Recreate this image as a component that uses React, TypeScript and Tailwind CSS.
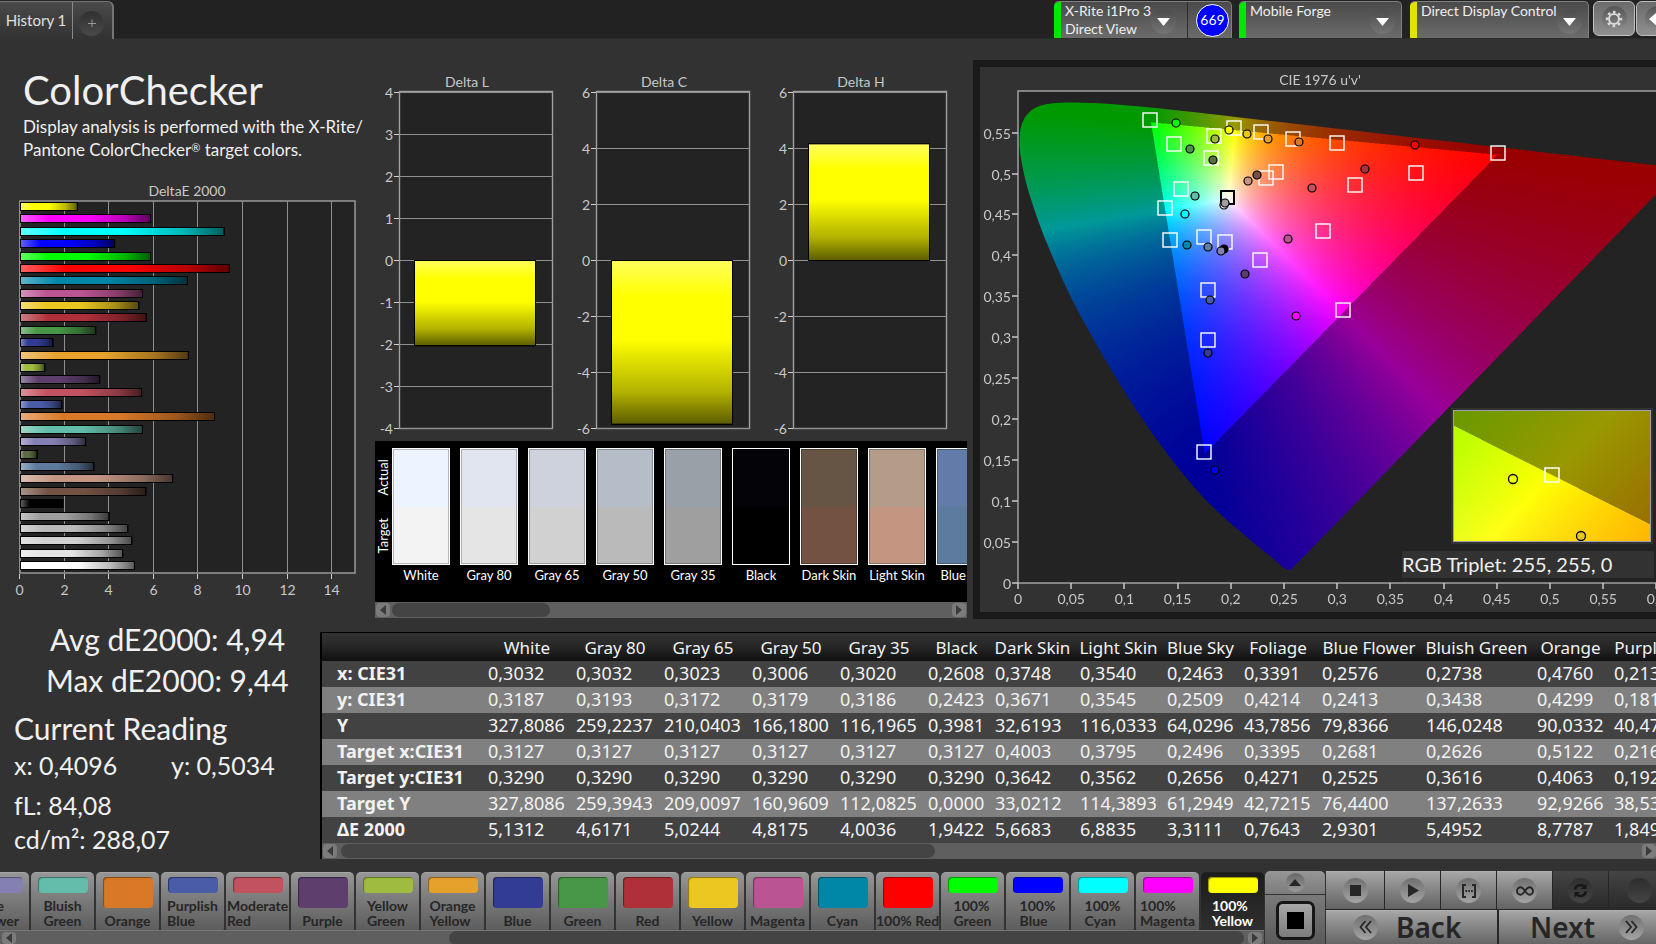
import React, { useLayoutEffect, useRef } from "react";

const LOCUS: [number, number][] = [
  [0.1741, 0.005], [0.1733, 0.0048], [0.1714, 0.0051], [0.1689, 0.0069], [0.1644, 0.0109],
  [0.1566, 0.0177], [0.144, 0.0297], [0.1355, 0.0399], [0.1241, 0.0578], [0.1096, 0.0868],
  [0.0913, 0.1327], [0.0687, 0.2007], [0.0454, 0.295], [0.0235, 0.4127], [0.0082, 0.5384],
  [0.0039, 0.6548], [0.0139, 0.7502], [0.0389, 0.812], [0.0743, 0.8338], [0.1142, 0.8262],
  [0.1547, 0.8059], [0.2296, 0.7543], [0.3016, 0.6923], [0.3731, 0.6245], [0.4441, 0.5547],
  [0.5125, 0.4866], [0.5752, 0.4242], [0.627, 0.3725], [0.6658, 0.334], [0.6915, 0.3083],
  [0.719, 0.2809], [0.7347, 0.2653],
];

function shade(x: number, y: number): [number, number, number] {
  const X = x / y;
  const Z = (1 - x - y) / y;
  const lin = [
    3.2406 * X - 1.5372 - 0.4986 * Z,
    -0.9689 * X + 1.8758 + 0.0415 * Z,
    0.0557 * X - 0.204 + 1.057 * Z,
  ];
  const inside = lin.every((c) => c >= 0);
  const top = Math.max(lin[0], lin[1], lin[2]);
  const k = inside ? 255 : 153;
  const f = (c: number) => (k * Math.max(0, c)) / top;
  return [f(lin[0]), f(lin[1]), f(lin[2])];
}

function paint(ctx: CanvasRenderingContext2D, w: number, h: number, toXy: (px: number, py: number) => [number, number]) {
  const img = ctx.createImageData(w, h);
  const sub = [0.25, 0.75];
  for (let j = 0; j < h; j++) {
    for (let i = 0; i < w; i++) {
      const o = (j * w + i) * 4;
      const sum = [0, 0, 0];
      for (const a of sub) {
        for (const b of sub) {
          const [x, y] = toXy(i + a, j + b);
          const c = shade(x, Math.max(y, 0.0005));
          sum[0] += c[0];
          sum[1] += c[1];
          sum[2] += c[2];
        }
      }
      img.data[o] = sum[0] / 4;
      img.data[o + 1] = sum[1] / 4;
      img.data[o + 2] = sum[2] / 4;
      img.data[o + 3] = 255;
    }
  }
  ctx.putImageData(img, 0, 0);
}

const CIE = { left: 38, bottom: 516, ux: 1064, vy: 819 };

function GamutCanvas() {
  const ref = useRef<HTMLCanvasElement>(null);
  useLayoutEffect(() => {
    const ctx = ref.current?.getContext("2d");
    if (!ctx) return;
    paint(ctx, 760, 545, (px, py) => {
      const u = (px - CIE.left) / CIE.ux;
      const v = (CIE.bottom - py) / CIE.vy;
      const d = 6 * u - 16 * v + 12;
      return [(9 * u) / d, (4 * v) / d];
    });
    const pts = LOCUS.map(([x, y]) => {
      const d = -2 * x + 12 * y + 3;
      return [CIE.left + ((4 * x) / d) * CIE.ux, CIE.bottom - ((9 * y) / d) * CIE.vy];
    });
    ctx.globalCompositeOperation = "destination-in";
    ctx.beginPath();
    ctx.moveTo(pts[0][0], pts[0][1]);
    for (let i = 0; i < pts.length - 1; i++) {
      const p0 = pts[Math.max(0, i - 1)];
      const p1 = pts[i];
      const p2 = pts[i + 1];
      const p3 = pts[Math.min(pts.length - 1, i + 2)];
      ctx.bezierCurveTo(
        p1[0] + (p2[0] - p0[0]) / 6, p1[1] + (p2[1] - p0[1]) / 6,
        p2[0] - (p3[0] - p1[0]) / 6, p2[1] - (p3[1] - p1[1]) / 6,
        p2[0], p2[1],
      );
    }
    ctx.closePath();
    ctx.fill();
  }, []);
  return <canvas ref={ref} width={760} height={545} className="absolute top-0 left-0 max-w-none" />;
}

function DetailCanvas() {
  const ref = useRef<HTMLCanvasElement>(null);
  useLayoutEffect(() => {
    const ctx = ref.current?.getContext("2d");
    if (!ctx) return;
    paint(ctx, 196, 130, (px, py) => [0.4193 + (px - 98) / 3950, 0.5053 + (64 - py) / 2500]);
  }, []);
  return <canvas ref={ref} width={196} height={130} className="block" />;
}

const TARGETS: [number, number][] = [
  [170, 53], [254, 61], [281, 65], [313, 72], [357, 76], [234, 69], [194, 77], [231, 91], [518, 86],
  [296, 105], [286, 111], [436, 106], [375, 118], [201, 122], [185, 141], [343, 164], [190, 173],
  [224, 170], [245, 175], [280, 193], [228, 223], [363, 243], [228, 273], [224, 385],
];

const READINGS: [number, number, string][] = [
  [196, 56, "#00ff00"], [249, 63, "#ffff00"], [267, 67, "#e7c71f"], [235, 72, "#a0bc40"],
  [288, 72, "#e6a02e"], [319, 75, "#d87a2b"], [210, 82, "#4a9549"], [233, 93, "#5b6b42"],
  [435, 78, "#ff0000"], [385, 102, "#af3039"], [277, 108, "#735243"], [268, 114, "#c3967f"],
  [332, 121, "#c15360"], [215, 129, "#64bdaa"], [205, 147, "#00ffff"], [244, 138, "#f3f3f3"],
  [245, 136, "#9f9f9f"], [308, 172, "#bb5492"], [207, 178, "#0087a7"], [228, 180, "#607c9f"],
  [244, 182, "#000000"], [241, 184, "#8580b3"], [265, 207, "#5c3e6b"], [230, 233, "#4a5ca7"],
  [316, 249, "#ff00ff"], [228, 286, "#333c95"], [235, 403, "#0000ff"],
];

const dec = (n: number) => String(Number(n.toFixed(2))).replace(".", ",");

function CieChart() {
  const steps = Array.from({ length: 13 }, (_, i) => i * 0.05);
  return (
    <section className="min-w-0 flex-1 mt-[21px] border-[7px] border-r-0 border-[#1a1a1a] bg-[#323232] overflow-hidden">
      <div className="relative w-[760px] h-[545px]">
        <div className="absolute left-[38px] top-[24px] right-0 bottom-[29px] bg-[#232323]" />
        <GamutCanvas />
        <svg width="760" height="545" className="absolute top-0 left-0 text-sm" fill="#c8c8c8">
          <text x="340" y="18" textAnchor="middle">CIE 1976 u'v'</text>
          <path d="M760 24H38V516H760" fill="none" stroke="#a0a0a0" strokeWidth="1.5" />
          {steps.map((s) => (
            <g key={s}>
              <path d={`M${Math.round(CIE.left + s * CIE.ux)} 516v6`} stroke="#c8c8c8" strokeWidth="1.5" />
              <text x={CIE.left + s * CIE.ux} y="537" textAnchor="middle">{dec(s)}</text>
              {s < 0.56 && (
                <>
                  <path d={`M32 ${Math.round(CIE.bottom - s * CIE.vy)}h6`} stroke="#c8c8c8" strokeWidth="1.5" />
                  <text x="31" y={CIE.bottom - s * CIE.vy + 6} textAnchor="end">{dec(s)}</text>
                </>
              )}
            </g>
          ))}
          {TARGETS.map(([x, y]) => (
            <rect key={`${x}-${y}`} x={x - 7} y={y - 7} width="14" height="14" fill="none" stroke="#fff" strokeWidth="1.4" />
          ))}
          <rect x="241" y="124" width="13" height="13" fill="none" stroke="#000" strokeWidth="2" />
          {READINGS.map(([x, y, c]) => (
            <circle key={`${x}-${y}`} cx={x} cy={y} r="4" fill={c} stroke="#000" strokeWidth="1.2" />
          ))}
        </svg>
        <div className="absolute left-[471px] top-[341px] border-2 border-[#323232]">
          <div className="relative border border-[#a0a0a0] overflow-hidden">
            <DetailCanvas />
            <svg width="196" height="130" className="absolute inset-0" fill="none">
              <rect x="91" y="57" width="14" height="14" stroke="#fff" strokeWidth="1.5" />
              <circle cx="59" cy="68" r="4.5" stroke="#000" strokeWidth="1.3" />
              <circle cx="127" cy="125" r="4.5" fill="#e7c71f" stroke="#000" strokeWidth="1.3" />
            </svg>
          </div>
        </div>
        <p className="absolute left-[422px] top-[484px] w-[252px] bg-[#323232] text-xl leading-[27px] text-[#f0f0f0] whitespace-nowrap">
          RGB Triplet: 255, 255, 0
        </p>
      </div>
    </section>
  );
}

const DELTA_E: [string, number][] = [
  ["#ffff00", 2.55], ["#ff00ff", 5.83], ["#00ffff", 9.13], ["#0000ff", 4.22], ["#00ff00", 5.83],
  ["#ff0000", 9.37], ["#0087a7", 7.49], ["#bb5492", 5.47], ["#ebc722", 5.3], ["#af3039", 5.64],
  ["#489647", 3.37], ["#333c95", 1.45], ["#e6a12d", 7.53], ["#9fbc40", 1.09], ["#5d3e6c", 3.55],
  ["#c2525f", 5.43], ["#4a5ca7", 1.85], ["#d97928", 8.7], ["#63bdaa", 5.47], ["#8580b3", 2.92],
  ["#5b6b42", 0.75], ["#5d7b9e", 3.29], ["#c49682", 6.82], ["#735243", 5.62], ["#000000", 1.9],
  ["#9f9f9f", 3.97], ["#bababa", 4.81], ["#d1d1d1", 4.99], ["#e5e5e5", 4.58], ["#ffffff", 5.11],
];

function Shading() {
  return (
    <svg width="0" height="0" className="absolute" aria-hidden="true">
      <defs>
        <linearGradient id="across" x1="0" x2="1" y1="0" y2="0">
          <stop offset="0" stopColor="#fff" stopOpacity=".38" />
          <stop offset=".22" stopColor="#fff" stopOpacity="0" />
          <stop offset=".5" stopColor="#000" stopOpacity="0" />
          <stop offset=".8" stopColor="#000" stopOpacity=".28" />
          <stop offset="1" stopColor="#000" stopOpacity=".64" />
        </linearGradient>
        <linearGradient id="down" x1="0" x2="0" y1="0" y2="1">
          <stop offset="0" stopColor="#fff" stopOpacity=".36" />
          <stop offset=".22" stopColor="#fff" stopOpacity="0" />
          <stop offset=".48" stopColor="#000" stopOpacity="0" />
          <stop offset=".8" stopColor="#000" stopOpacity=".3" />
          <stop offset="1" stopColor="#000" stopOpacity=".64" />
        </linearGradient>
      </defs>
    </svg>
  );
}

function DeltaEChart() {
  const unit = 22.3;
  return (
    <svg width="375" height="420" className="block text-sm" fill="#c8c8c8">
      <text x="187" y="15" textAnchor="middle">DeltaE 2000</text>
      <rect x="20" y="20" width="335" height="372" fill="#232323" stroke="#a0a0a0" strokeWidth="1.4" />
      {[0, 2, 4, 6, 8, 10, 12, 14].map((n) => {
        const x = Math.round(19 + n * unit) + 0.5;
        return (
          <g key={n}>
            <path d={`M${x} 20V392`} stroke="#909090" />
            <path d={`M${x} 393v5`} stroke="#d0d0d0" />
            <text x={x} y="414" textAnchor="middle">{n}</text>
          </g>
        );
      })}
      {DELTA_E.map(([c, v], i) => {
        const y = Math.round(21 + i * 12.38) + 0.5;
        return (
          <g key={i}>
            <rect x="20.5" y={y} width={v * unit} height="8" fill={c} stroke="#000" />
            <rect x="20.5" y={y} width={v * unit} height="8" fill="url(#across)" stroke="#000" />
          </g>
        );
      })}
    </svg>
  );
}

function DeltaChart({ title, max, step, value }: { title: string; max: number; step: number; value: number }) {
  const top = 20.5;
  const mid = 189;
  const unit = 168 / max;
  const ticks: number[] = [];
  for (let t = max; t >= -max; t -= step) ticks.push(t);
  const y = value > 0 ? mid + 0.5 - value * unit : mid + 0.5;
  return (
    <svg width="197" height="370" className="block shrink-0 text-sm" fill="#c8c8c8">
      <text x="92" y="16" textAnchor="middle">{title}</text>
      <rect x="24.5" y={top} width="153" height="337" fill="#232323" stroke="#a0a0a0" strokeWidth="1.4" />
      {ticks.map((t) => {
        const ty = Math.round(mid - t * unit) + 0.5;
        return (
          <g key={t}>
            <path d={`M24 ${ty}H178`} stroke="#909090" />
            <path d={`M19 ${ty}h5`} stroke="#d0d0d0" />
            <text x="18" y={ty + 5} textAnchor="end">{t}</text>
          </g>
        );
      })}
      <rect x="39.5" y={y} width="121" height={Math.abs(value) * unit} fill="#ffff00" stroke="#000" />
      <rect x="39.5" y={y} width="121" height={Math.abs(value) * unit} fill="url(#down)" stroke="#000" />
    </svg>
  );
}

function Arrow({ dir }: { dir: "left" | "right" }) {
  return (
    <button
      type="button"
      aria-label={dir === "left" ? "Scroll left" : "Scroll right"}
      className="shrink-0 w-[14px] self-stretch my-px rounded-[4px] bg-[#7b7b7b] flex items-center justify-center"
    >
      <svg width="6" height="10" fill="#3a3a3a">
        <path d={dir === "left" ? "M6 0V10L0 5Z" : "M0 0V10L6 5Z"} />
      </svg>
    </button>
  );
}

const SWATCHES: [string, string, string][] = [
  ["White", "#eef4ff", "#f3f3f3"], ["Gray 80", "#e1e5f0", "#e5e5e5"], ["Gray 65", "#cdd2dd", "#d1d1d1"],
  ["Gray 50", "#b5bdc8", "#bababa"], ["Gray 35", "#9aa0a7", "#9f9f9f"], ["Black", "#030308", "#000000"],
  ["Dark Skin", "#665545", "#735243"], ["Light Skin", "#b39c89", "#c49682"], ["Blue Sky", "#637ba9", "#5d7b9e"],
];

function SwatchPanel() {
  return (
    <div className="w-[592px] bg-black text-white">
      <div className="flex h-[161px] overflow-hidden pt-[7px]">
        <div className="w-[17px] shrink-0 h-[117px] flex flex-col-reverse text-[13px] leading-[17px]">
          <span className="flex-1 [writing-mode:vertical-rl] rotate-180 text-center">Target</span>
          <span className="flex-1 [writing-mode:vertical-rl] rotate-180 text-center">Actual</span>
        </div>
        <ul className="flex gap-[10px]">
          {SWATCHES.map(([name, actual, target]) => (
            <li key={name} className="w-[58px] shrink-0">
              <div className="h-[117px] border border-white flex flex-col">
                <div className="flex-1 border border-b-0 border-black/25" style={{ background: actual }} />
                <div className="flex-1 border border-t-0 border-black/25" style={{ background: target }} />
              </div>
              <p className="text-center text-[13px] leading-[20px] whitespace-nowrap">{name}</p>
            </li>
          ))}
        </ul>
      </div>
      <div className="h-4 bg-[#5f5f5f] flex items-center px-px">
        <Arrow dir="left" />
        <div className="ml-[2px] h-[14px] w-[158px] rounded-full bg-[#444]" />
        <div className="flex-1" />
        <Arrow dir="right" />
      </div>
    </div>
  );
}

const COLUMNS: [string, string, string[]][] = [
  ["White", "w-[88px]", ["0,3032", "0,3187", "327,8086", "0,3127", "0,3290", "327,8086", "5,1312"]],
  ["Gray 80", "w-[88px]", ["0,3032", "0,3193", "259,2237", "0,3127", "0,3290", "259,3943", "4,6171"]],
  ["Gray 65", "w-[88px]", ["0,3023", "0,3172", "210,0403", "0,3127", "0,3290", "209,0097", "5,0244"]],
  ["Gray 50", "w-[88px]", ["0,3006", "0,3179", "166,1800", "0,3127", "0,3290", "160,9609", "4,8175"]],
  ["Gray 35", "w-[88px]", ["0,3020", "0,3186", "116,1965", "0,3127", "0,3290", "112,0825", "4,0036"]],
  ["Black", "w-[67px]", ["0,2608", "0,2423", "0,3981", "0,3127", "0,3290", "0,0000", "1,9422"]],
  ["Dark Skin", "w-[85px]", ["0,3748", "0,3671", "32,6193", "0,4003", "0,3642", "33,0212", "5,6683"]],
  ["Light Skin", "w-[87px]", ["0,3540", "0,3545", "116,0333", "0,3795", "0,3562", "114,3893", "6,8835"]],
  ["Blue Sky", "w-[77px]", ["0,2463", "0,2509", "64,0296", "0,2496", "0,2656", "61,2949", "3,3111"]],
  ["Foliage", "w-[78px]", ["0,3391", "0,4214", "43,7856", "0,3395", "0,4271", "42,7215", "0,7643"]],
  ["Blue Flower", "w-[104px]", ["0,2576", "0,2413", "79,8366", "0,2681", "0,2525", "76,4400", "2,9301"]],
  ["Bluish Green", "w-[111px]", ["0,2738", "0,3438", "146,0248", "0,2626", "0,3616", "137,2633", "5,4952"]],
  ["Orange", "w-[77px]", ["0,4760", "0,4299", "90,0332", "0,5122", "0,4063", "92,9266", "8,7787"]],
  ["Purplish Blue", "w-[116px]", ["0,213", "0,181", "40,47", "0,216", "0,192", "38,53", "1,849"]],
];
const ROWS = ["x: CIE31", "y: CIE31", "Y", "Target x:CIE31", "Target y:CIE31", "Target Y", "ΔE 2000"];

function DataTable() {
  return (
    <div className="mt-[13px] mb-[12px] min-w-0 flex-1 border-l-2 border-t border-black overflow-hidden">
      <div className="overflow-hidden">
        <table className="table-fixed w-[1315px] border-collapse text-[18px] leading-[24px] text-[#f2f2f2] [font-family:'Noto_Sans',sans-serif]">
          <thead>
            <tr className="h-[28px] bg-linear-to-b from-[#333] via-[#262626] to-[#101010]">
              <th className="w-[161px]" aria-label="Quantity" />
              {COLUMNS.map(([name, w]) => (
                <th key={name} className={`${w} p-0 pt-px font-normal text-[17px] whitespace-nowrap`}>{name}</th>
              ))}
            </tr>
          </thead>
          <tbody>
            {ROWS.map((row, r) => (
              <tr key={row} className="bg-[#424242] even:bg-[#808080]">
                <th className="p-0 pb-[2px] pl-[15px] text-left font-bold whitespace-nowrap">{row}</th>
                {COLUMNS.map(([name, , vals]) => (
                  <td key={name} className="p-0 pb-[2px] pl-[5px] whitespace-nowrap">{vals[r]}</td>
                ))}
              </tr>
            ))}
          </tbody>
        </table>
      </div>
      <div className="h-4 bg-[#5f5f5f] flex items-center pl-px">
        <Arrow dir="left" />
        <div className="ml-[4px] h-[14px] w-[594px] rounded-full bg-[#444]" />
        <div className="flex-1" />
        <Arrow dir="right" />
      </div>
    </div>
  );
}

const PATCHES: [string, string][] = [
  ["Blue\nFlower", "#8580b3"], ["Bluish\nGreen", "#63bdaa"], ["Orange", "#d97928"], ["Purplish\nBlue", "#4a5ca7"],
  ["Moderate\nRed", "#c2525f"], ["Purple", "#5d3e6c"], ["Yellow\nGreen", "#9fbc40"], ["Orange\nYellow", "#e6a12d"],
  ["Blue", "#333c95"], ["Green", "#489647"], ["Red", "#af3039"], ["Yellow", "#ebc722"], ["Magenta", "#bb5492"],
  ["Cyan", "#0087a7"], ["100% Red", "#ff0000"], ["100%\nGreen", "#00ff00"], ["100%\nBlue", "#0000ff"],
  ["100%\nCyan", "#00ffff"], ["100%\nMagenta", "#ff00ff"], ["100%\nYellow", "#ffff00"],
];

function PatchButton({ name, color, active }: { name: string; color: string; active: boolean }) {
  const tall = !name.includes("\n");
  return (
    <button
      type="button"
      aria-pressed={active}
      className={`shrink-0 w-[63px] h-[61px] pt-[4px] pb-[5px] rounded-[5px] border-t flex flex-col items-center justify-between ${
        active
          ? "border-[#222] bg-linear-to-b from-[#1c1c1c] to-[#303030] text-white"
          : "border-[#a5a5a5] bg-linear-to-b from-[#969696] to-[#5a5a5a] text-[#262626]"
      }`}
    >
      <span
        className={`w-[50px] rounded-[4px] shadow-[inset_1px_1px_1px_rgba(0,0,0,0.4)] ${tall ? "h-[31px]" : "h-[16px]"}`}
        style={{ background: color }}
      />
      <span className="text-[14px] leading-[15px] font-bold text-left whitespace-pre">{name}</span>
    </button>
  );
}

function Knob({ children }: { children: React.ReactNode }) {
  return (
    <span className="size-[25px] rounded-full bg-linear-to-b from-[#707070] to-[#a4a4a4] flex items-center justify-center">
      {children}
    </span>
  );
}

const KEY = "flex items-center bg-linear-to-b from-[#a6a6a6] to-[#636363] border-t border-[#b0b0b0]";

function Transport() {
  return (
    <div className="shrink-0 flex text-[#262626]">
      <div className="w-[60px] mx-px flex flex-col gap-px">
        <button type="button" aria-label="Expand" className="h-[23px] rounded-t-[5px] bg-linear-to-b from-[#969696] to-[#7c7c7c] flex items-center justify-center">
          <span className="size-[19px] rounded-full bg-linear-to-b from-[#666] to-[#9a9a9a] flex items-center justify-center">
            <svg width="12" height="7" fill="#262626"><path d="M6 0L12 7H0Z" /></svg>
          </span>
        </button>
        <button type="button" aria-label="Pattern window" className="flex-1 bg-linear-to-b from-[#7a7a7a] to-[#5a5a5a] flex items-center justify-center">
          <span className="size-[39px] rounded-[7px] border-[3px] border-[#161616] bg-linear-to-b from-[#a8a8a8] to-[#7c7c7c] flex items-center justify-center">
            <span className="size-[17px] bg-black" />
          </span>
        </button>
      </div>
      <div className="w-[330px] flex flex-col gap-px bg-[#262626]">
        <div className="grid grid-cols-[58px_55px_55px_55px_55px_1fr] gap-px h-[38px]">
          <button type="button" aria-label="Stop" className={`${KEY} justify-center`}>
            <Knob><svg width="11" height="11" fill="currentColor"><path d="M0 0h11v11H0z" /></svg></Knob>
          </button>
          <button type="button" aria-label="Play" className={`${KEY} justify-center`}>
            <Knob><svg width="12" height="13" fill="currentColor"><path d="M1 0L12 6.5L1 13Z" /></svg></Knob>
          </button>
          <button type="button" aria-label="Measure series" className={`${KEY} justify-center`}>
            <Knob>
              <svg width="16" height="14" fill="none" stroke="currentColor" strokeWidth="2">
                <path d="M5 1H2V13H5M11 1H14V13H11" />
                <path d="M4.5 7H12" strokeDasharray="1.6 1.2" />
              </svg>
            </Knob>
          </button>
          <button type="button" aria-label="Measure continuously" className={`${KEY} justify-center`}>
            <Knob>
              <svg width="18" height="10" fill="none" stroke="currentColor" strokeWidth="1.9">
                <path d="M9 5C7 2.2 6 1.3 4.6 1.3a3.6 3.7 0 0 0 0 7.4C6 8.7 7 7.8 9 5C11 2.2 12 1.3 13.4 1.3a3.6 3.7 0 0 1 0 7.4C12 8.7 11 7.8 9 5Z" />
              </svg>
            </Knob>
          </button>
          <button type="button" aria-label="Refresh" disabled className="flex items-center justify-center bg-linear-to-b from-[#444] to-[#2a2a2a] text-[#171717]">
            <span className="size-[25px] rounded-full bg-linear-to-b from-[#2e2e2e] to-[#444] flex items-center justify-center">
              <svg width="15" height="15" viewBox="0 0 15 15" fill="none" stroke="currentColor" strokeWidth="2.4">
                <path d="M2 6.5A5.5 5.5 0 0 1 11.5 3.8M13 8.5A5.5 5.5 0 0 1 3.5 11.2" />
                <path d="M13.5 0.5V6H8ZM1.5 14.5V9H7Z" fill="currentColor" stroke="none" />
              </svg>
            </span>
          </button>
          <button type="button" aria-label="Record" disabled className="flex items-center justify-center bg-linear-to-b from-[#444] to-[#2a2a2a] pl-[13px]">
            <span className="size-[25px] rounded-full bg-linear-to-b from-[#2e2e2e] to-[#444]" />
          </button>
        </div>
        <div className="flex-1 grid grid-cols-[171px_1fr] gap-[2px] [font-family:'Noto_Sans',sans-serif] text-[28px] leading-[32px] font-semibold">
          <button type="button" className={`${KEY} pb-[2px] pl-[27px] gap-[18px]`}>
            <Knob>
              <svg width="13" height="14" fill="none" stroke="currentColor" strokeWidth="1.8"><path d="M6.5 1L1.5 7L6.5 13M12 1L7 7L12 13" /></svg>
            </Knob>
            Back
          </button>
          <button type="button" className={`${KEY} pb-[2px] pl-[31px] gap-[24px]`}>
            Next
            <Knob>
              <svg width="13" height="14" fill="none" stroke="currentColor" strokeWidth="1.8"><path d="M1 1L6 7L1 13M6.5 1L11.5 7L6.5 13" /></svg>
            </Knob>
          </button>
        </div>
      </div>
    </div>
  );
}

function DropKnob() {
  return (
    <span className="shrink-0 size-[25px] mt-[7px] rounded-full bg-linear-to-b from-[#4c4c4c] to-[#757575] flex items-center justify-center">
      <svg width="13" height="8" fill="#fff"><path d="M0 0H13L6.5 8Z" /></svg>
    </span>
  );
}

const DEVICE = "h-[37px] flex items-start overflow-hidden rounded-t-[5px] border-t border-r border-[#808080] bg-linear-to-b from-[#4a4a4a] to-[#6c6c6c] text-[14px] leading-[18px] text-[#f0f0f0] text-left";

function Header() {
  return (
    <header className="h-[39px] pt-px bg-[#222] border-b border-[#2b2b2b] flex items-start justify-between">
      <div className="flex h-[38px] w-[114px] rounded-tr-[6px] border-t border-r-2 border-[#757575] bg-linear-to-b from-[#4a4a4a] to-[#323232]">
        <button type="button" className="w-[73px] border-r border-[#888] text-[15px] text-[#e0e0e0]">History 1</button>
        <button type="button" aria-label="New tab" className="flex-1 flex items-center justify-center pr-[2px]">
          <span className="size-[25px] mt-[5px] rounded-full bg-linear-to-b from-[#303030] to-[#4a4a4a] text-[#999] flex items-center justify-center">
            <svg width="8" height="8" stroke="currentColor"><path d="M4 0.5V8M0 4.5H8" /></svg>
          </span>
        </button>
      </div>
      <div className="flex">
        <div className={`${DEVICE} w-[178px] mr-[7px]`}>
          <span className="shrink-0 w-[7px] self-stretch bg-[#00e800]" />
          <button type="button" className="min-w-0 flex-1 flex justify-between items-start text-left pl-[4px] pr-[12px]">
            <span className="whitespace-nowrap">X-Rite i1Pro 3<br />Direct View</span>
            <DropKnob />
          </button>
          <span className="shrink-0 w-px h-full bg-[#2c2c2c]" />
          <span className="shrink-0 w-[43px] pl-[8px] h-full flex items-center">
            <span className="shrink-0 size-[33px] rounded-full border border-white bg-[#00f] text-[14px] text-white flex items-center justify-center">669</span>
          </span>
        </div>
        <button type="button" className={`${DEVICE} w-[163px] mr-[8px]`}>
          <span className="shrink-0 w-[7px] self-stretch bg-[#00e800]" />
          <span className="min-w-0 flex-1 pl-[4px] whitespace-nowrap">Mobile Forge</span>
          <span className="mr-[6px]"><DropKnob /></span>
        </button>
        <button type="button" className={`${DEVICE} w-[179px] mr-[4px]`}>
          <span className="shrink-0 w-[7px] self-stretch bg-[#e2e200]" />
          <span className="min-w-0 flex-1 pl-[4px] whitespace-nowrap">Direct Display Control</span>
          <span className="mr-[6px]"><DropKnob /></span>
        </button>
        <button type="button" aria-label="Settings" className="w-[42px] h-[35px] rounded-[6px] border border-[#c0c0c0] bg-linear-to-b from-[#6a6a6a] to-[#909090] flex items-center justify-center">
          <span className="size-[25px] rounded-full bg-linear-to-b from-[#555] to-[#8c8c8c] flex items-center justify-center">
            <svg width="18" height="18" viewBox="-9 -9 18 18" fill="none" stroke="#dcdcdc">
              <circle r="5" strokeWidth="2" />
              <circle r="7" strokeWidth="2.4" strokeDasharray="2.6 2.898" strokeDashoffset="1.3" />
            </svg>
          </span>
        </button>
        <div className="w-[21px] overflow-hidden">
          <button type="button" aria-label="Collapse" className="ml-px w-[42px] h-[35px] rounded-[6px] border border-[#c0c0c0] bg-linear-to-b from-[#6a6a6a] to-[#909090] flex items-center justify-center">
            <span className="size-[25px] rounded-full bg-linear-to-b from-[#555] to-[#8c8c8c] flex items-center pl-[4px]">
              <svg width="8" height="14" fill="#fff"><path d="M8 0V14L0 7Z" /></svg>
            </span>
          </button>
        </div>
      </div>
    </header>
  );
}

export default function App() {
  return (
    <div className="min-h-screen flex flex-col overflow-hidden bg-[#323232] text-[#f0f0f0] [font-family:Lato,'Noto_Sans',sans-serif]">
      <Shading />
      <Header />
      <main className="flex-1 flex flex-col">
        <div className="flex">
          <div className="w-[375px] shrink-0 pt-[27px]">
            <h1 className="pl-[23px] text-[40px] leading-[48px]">ColorChecker</h1>
            <p className="pl-[23px] pt-px text-[17px] leading-[23px] whitespace-nowrap">
              Display analysis is performed with the X-Rite/
              <br />
              Pantone ColorChecker<span className="text-[11px] leading-none align-[4px]">®</span> target colors.
            </p>
            <div className="pt-[20px]">
              <DeltaEChart />
            </div>
          </div>
          <div className="w-[592px] shrink-0 pt-[32px]">
            <div className="flex h-[370px]">
              <DeltaChart title="Delta L" max={4} step={1} value={-2.03} />
              <DeltaChart title="Delta C" max={6} step={2} value={-5.85} />
              <DeltaChart title="Delta H" max={6} step={2} value={4.17} />
            </div>
            <SwatchPanel />
          </div>
          <div className="w-[6px] shrink-0" />
          <CieChart />
        </div>
        <div className="flex">
          <div className="w-[320px] shrink-0">
            <div className="text-[30px] leading-[41px]">
              <p className="pl-[50px]">Avg dE2000: 4,94</p>
              <p className="pl-[46px]">Max dE2000: 9,44</p>
            </div>
            <div className="pl-[14px] pt-[7px] text-[25px] leading-[34px]">
              <h2 className="text-[30px] leading-[40px]">Current Reading</h2>
              <p className="flex"><span className="w-[157px]">x: 0,4096</span><span>y: 0,5034</span></p>
              <p className="pt-[6px]">fL: 84,08</p>
              <p>cd/m²: 288,07</p>
            </div>
          </div>
          <DataTable />
        </div>
      </main>
      <footer className="h-[74px] flex items-stretch">
        <div className="min-w-0 flex-1 flex flex-col bg-[#333]">
          <div className="flex justify-end gap-[2px] overflow-hidden h-[62px] pt-px">
            {PATCHES.map(([name, color], i) => (
              <PatchButton key={i} name={name} color={color} active={i === PATCHES.length - 1} />
            ))}
          </div>
          <div className="flex-1 border-t border-[#777] bg-[#5f5f5f] flex px-[2px]">
            <Arrow dir="left" />
            <div className="flex-1" />
            <div className="w-[795px] h-[14px] rounded-full bg-[#444] mr-[4px]" />
            <Arrow dir="right" />
          </div>
        </div>
        <Transport />
      </footer>
    </div>
  );
}
